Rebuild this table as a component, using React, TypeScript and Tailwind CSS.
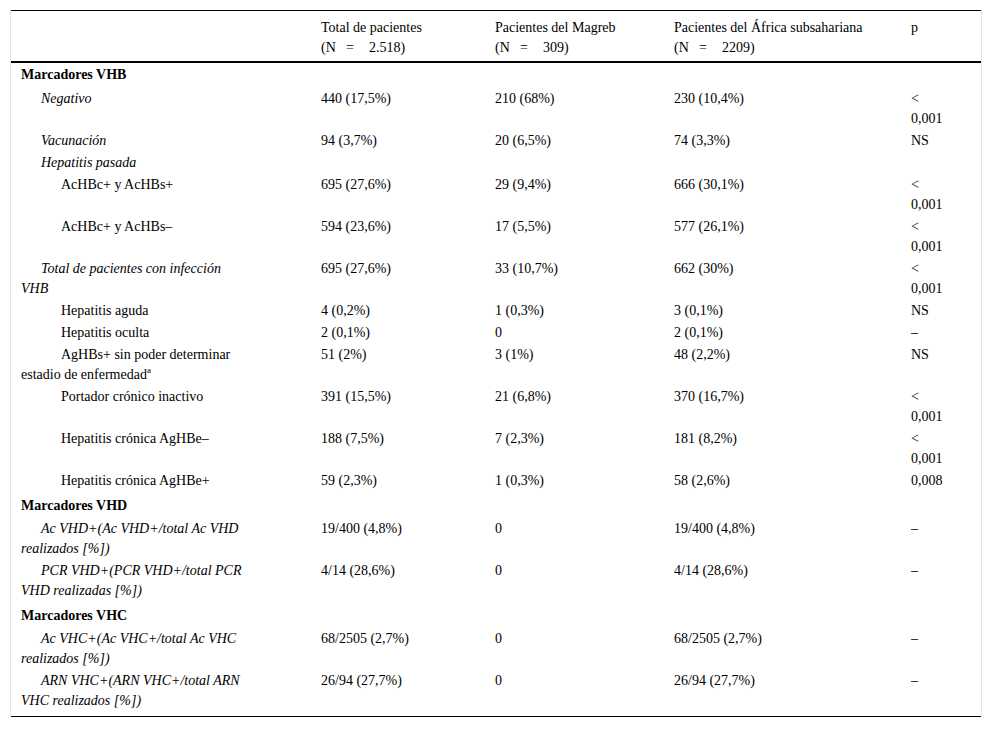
import React from "react";

type Row = {
  label: React.ReactNode;
  indent?: 0 | 1 | 2;
  italic?: boolean;
  bold?: boolean;
  first?: boolean;
  v?: [React.ReactNode, React.ReactNode, React.ReactNode, React.ReactNode];
};

const LT = (
  <>
    &lt;
    <br />
    0,001
  </>
);

const rows: Row[] = [
  { label: "Marcadores VHB", bold: true, first: true },
  { label: "Negativo", indent: 1, italic: true, v: ["440 (17,5%)", "210 (68%)", "230 (10,4%)", LT] },
  { label: "Vacunación", indent: 1, italic: true, v: ["94 (3,7%)", "20 (6,5%)", "74 (3,3%)", "NS"] },
  { label: "Hepatitis pasada", indent: 1, italic: true, v: ["", "", "", ""] },
  { label: "AcHBc+ y AcHBs+", indent: 2, v: ["695 (27,6%)", "29 (9,4%)", "666 (30,1%)", LT] },
  { label: "AcHBc+ y AcHBs–", indent: 2, v: ["594 (23,6%)", "17 (5,5%)", "577 (26,1%)", LT] },
  {
    label: (
      <>
        Total de pacientes con infección
        <br />
        VHB
      </>
    ),
    indent: 1,
    italic: true,
    v: ["695 (27,6%)", "33 (10,7%)", "662 (30%)", LT],
  },
  { label: "Hepatitis aguda", indent: 2, v: ["4 (0,2%)", "1 (0,3%)", "3 (0,1%)", "NS"] },
  { label: "Hepatitis oculta", indent: 2, v: ["2 (0,1%)", "0", "2 (0,1%)", "–"] },
  {
    label: (
      <>
        AgHBs+ sin poder determinar
        <br />
        estadio de enfermedad
        <sup className="text-[9px] leading-none top-[-6px]">a</sup>
      </>
    ),
    indent: 2,
    v: ["51 (2%)", "3 (1%)", "48 (2,2%)", "NS"],
  },
  { label: "Portador crónico inactivo", indent: 2, v: ["391 (15,5%)", "21 (6,8%)", "370 (16,7%)", LT] },
  { label: "Hepatitis crónica AgHBe–", indent: 2, v: ["188 (7,5%)", "7 (2,3%)", "181 (8,2%)", LT] },
  { label: "Hepatitis crónica AgHBe+", indent: 2, v: ["59 (2,3%)", "1 (0,3%)", "58 (2,6%)", "0,008"] },
  { label: "Marcadores VHD", bold: true },
  {
    label: (
      <>
        Ac VHD+(Ac VHD+/total Ac VHD
        <br />
        realizados [%])
      </>
    ),
    indent: 1,
    italic: true,
    v: ["19/400 (4,8%)", "0", "19/400 (4,8%)", "–"],
  },
  {
    label: (
      <>
        PCR VHD+(PCR VHD+/total PCR
        <br />
        VHD realizadas [%])
      </>
    ),
    indent: 1,
    italic: true,
    v: ["4/14 (28,6%)", "0", "4/14 (28,6%)", "–"],
  },
  { label: "Marcadores VHC", bold: true },
  {
    label: (
      <>
        Ac VHC+(Ac VHC+/total Ac VHC
        <br />
        realizados [%])
      </>
    ),
    indent: 1,
    italic: true,
    v: ["68/2505 (2,7%)", "0", "68/2505 (2,7%)", "–"],
  },
  {
    label: (
      <>
        ARN VHC+(ARN VHC+/total ARN
        <br />
        VHC realizados [%])
      </>
    ),
    indent: 1,
    italic: true,
    v: ["26/94 (27,7%)", "0", "26/94 (27,7%)", "–"],
  },
];

function NLine({ n }: { n: string }) {
  return (
    <span className="whitespace-nowrap">
      <span className="inline-block w-[20px]">(N</span>
      <span className="inline-block w-[8px] ml-[5px] text-center">=</span>
      <span className="inline-block ml-[15px]">{n}</span>
    </span>
  );
}

export default function App() {
  return (
    <div className="bg-white min-h-[729px] pt-[10px] pl-[10px]">
      <div
        className="w-[972px] border-x border-[#e4e4e4] text-black text-[14px] leading-[20px]"
        style={{ fontFamily: '"Liberation Serif", "Times New Roman", serif' }}
      >
        <table className="w-[970px] table-fixed border-collapse">
          <colgroup>
            <col className="w-[300px]" />
            <col className="w-[174px]" />
            <col className="w-[179px]" />
            <col className="w-[237px]" />
            <col className="w-[80px]" />
          </colgroup>
          <thead>
            <tr className="border-t border-black border-b-2">
              <th className="px-[10px] pt-[7px] pb-[3px]"></th>
              <th className="px-[10px] pt-[7px] pb-[3px] text-left font-normal align-top">
                Total de pacientes
                <br />
                <NLine n="2.518)" />
              </th>
              <th className="px-[10px] pt-[7px] pb-[3px] text-left font-normal align-top">
                Pacientes del Magreb
                <br />
                <NLine n="309)" />
              </th>
              <th className="px-[10px] pt-[7px] pb-[3px] text-left font-normal align-top">
                Pacientes del África subsahariana
                <br />
                <NLine n="2209)" />
              </th>
              <th className="px-[10px] pt-[7px] pb-[3px] text-left font-normal align-top">p</th>
            </tr>
          </thead>
          <tbody>
            {rows.map((r, i) => {
              const last = i === rows.length - 1;
              if (r.bold) {
                return (
                  <tr key={i}>
                    <td
                      colSpan={5}
                      className={`px-[10px] font-bold align-top ${r.first ? "pt-[2px] pb-[3px]" : "pt-[4px] pb-[2px]"}`}
                    >
                      {r.label}
                    </td>
                  </tr>
                );
              }
              const indentCls = r.indent === 2 ? "indent-[40px]" : r.indent === 1 ? "indent-[20px]" : "";
              return (
                <tr key={i} className={last ? "border-b border-black" : ""}>
                  <td
                    className={`px-[10px] pt-[1px] align-top ${last ? "pb-[5px]" : "pb-[1px]"} ${indentCls} ${
                      r.italic ? "italic" : ""
                    }`}
                  >
                    {r.label}
                  </td>
                  {r.v!.map((c, j) => (
                    <td key={j} className={`px-[10px] pt-[1px] align-top ${last ? "pb-[5px]" : "pb-[1px]"}`}>
                      {c}
                    </td>
                  ))}
                </tr>
              );
            })}
          </tbody>
        </table>
      </div>
    </div>
  );
}
